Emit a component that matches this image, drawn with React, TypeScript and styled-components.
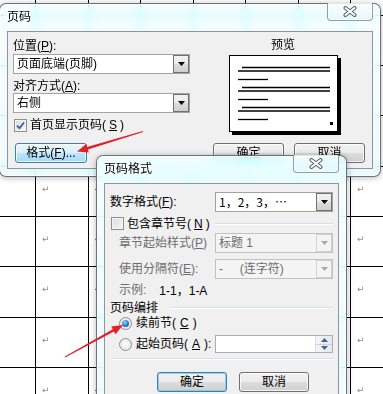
import styled, { createGlobalStyle } from 'styled-components';

const GlobalStyle = createGlobalStyle`
  html, body {
    margin: 0;
    padding: 0;
    background: #fff;
  }
  body {
    font-family: "Liberation Sans", "Noto Sans CJK SC", sans-serif;
    font-size: 12px;
    line-height: 14px;
    color: #000;
  }
`;

const Screen = styled.div`
  position: relative;
  width: 383px;
  height: 394px;
  overflow: hidden;
  background: #fff;
`;

/* the Word table that lies behind both dialogs */
const COLS = 8;
const ROWS = 9;

const DocTable = styled.div`
  display: grid;
  grid-template-columns: repeat(${COLS}, 52.5px);
  grid-auto-rows: 50.33px;
  width: max-content;
  margin: -34.67px 0 0 -16.5px;
`;

const DocCell = styled.div`
  box-sizing: border-box;
  display: flex;
  align-items: center;
  padding: 0 0 5px 6px;
  border-right: 1px solid #000;
  border-bottom: 1px solid #000;
  font-family: "DejaVu Sans", sans-serif;
  font-size: 9px;
  line-height: 10px;
  color: #8c8c8c;
`;

/* Aero frame; dialogs float freely over the document */
const Window = styled.div<{ $x: number; $y: number; $w: number; $h: number }>`
  position: absolute;
  left: ${(p) => p.$x}px;
  top: ${(p) => p.$y}px;
  width: ${(p) => p.$w}px;
  height: ${(p) => p.$h}px;
  box-sizing: border-box;
  display: flex;
  flex-direction: column;
  padding: 0 7px 7px;
  border: 1px solid rgba(52, 62, 72, 0.72);
  border-radius: 7px;
  background: linear-gradient(rgba(246, 252, 254, 0.66), rgba(236, 248, 252, 0.66));
  backdrop-filter: blur(4px) sepia(1) hue-rotate(135deg) saturate(2.2) brightness(1.06);
  box-shadow: 0 1px 6px rgba(0, 0, 0, 0.28), inset 0 0 0 1px rgba(255, 255, 255, 0.75);
`;

const TitleBar = styled.div`
  flex: none;
  height: 27px;
  display: flex;
  align-items: flex-start;
  justify-content: space-between;
`;

const Title = styled.span`
  line-height: 27px;
  text-shadow: 0 0 6px #fff, 0 0 3px #fff;
`;

const CloseButton = styled.span`
  margin-top: -1px;
  width: 46px;
  height: 18px;
  box-sizing: border-box;
  display: flex;
  align-items: center;
  justify-content: center;
  border: 1px solid rgba(70, 80, 92, 0.55);
  border-top: none;
  border-radius: 0 0 4px 4px;
  background: linear-gradient(rgba(255, 255, 255, 0.55), rgba(226, 238, 244, 0.35));
  box-shadow: inset 0 0 0 1px rgba(255, 255, 255, 0.6);
`;

const Client = styled.div`
  flex: 1;
  min-height: 0;
  display: flex;
  flex-direction: column;
  background: #f0f0f0;
  border: 1px solid rgba(84, 94, 106, 0.62);
`;

const Mn = styled.span`
  text-decoration: underline;
  text-underline-offset: 1px;
`;

const Cjk = styled.span`
  font-family: "Noto Sans CJK SC", sans-serif;
`;

/* ---------- shared controls ---------- */

const Combo = styled.div<{ $disabled?: boolean; $w: number }>`
  box-sizing: border-box;
  width: ${(p) => p.$w}px;
  height: 20px;
  display: flex;
  align-items: stretch;
  border: 1px solid ${(p) => (p.$disabled ? '#c2c2c2' : '#a3a3a3')};
  background: ${(p) => (p.$disabled ? '#f4f4f4' : '#fff')};
  color: ${(p) => (p.$disabled ? '#6d6d6d' : '#000')};
`;

const ComboText = styled.span`
  flex: 1;
  padding-left: 3px;
  line-height: 18px;
  white-space: pre;
`;

const DropButton = styled.span<{ $disabled?: boolean }>`
  width: 16px;
  box-sizing: border-box;
  display: flex;
  align-items: center;
  justify-content: center;
  border: 1px solid ${(p) => (p.$disabled ? '#d2d2d2' : '#707070')};
  background: ${(p) =>
    p.$disabled
      ? '#f4f4f4'
      : 'linear-gradient(#f2f2f2 0%, #ebebeb 50%, #dddddd 50%, #cfcfcf 100%)'};
`;

const Arrow = ({ color }: { color: string }) => (
  <svg width="7" height="4" viewBox="0 0 7 4">
    <polygon points="0,0 7,0 3.5,4" fill={color} />
  </svg>
);

const ComboBox = ({
  children,
  width,
  disabled,
}: {
  children: React.ReactNode;
  width: number;
  disabled?: boolean;
}) => (
  <Combo $w={width} $disabled={disabled}>
    <ComboText>{children}</ComboText>
    <DropButton $disabled={disabled}>
      <Arrow color={disabled ? '#a8a8a8' : '#000'} />
    </DropButton>
  </Combo>
);

const CheckBox = styled.span`
  flex: none;
  width: 13px;
  height: 13px;
  box-sizing: border-box;
  display: flex;
  align-items: center;
  justify-content: center;
  border: 1px solid #8e8f8f;
  background: linear-gradient(135deg, #d9dbde, #f7f7f7);
  box-shadow: inset 0 0 0 1px #f4f4f4;
`;

const CheckRow = styled.div<{ $ml: number; $gap: number }>`
  display: flex;
  align-items: center;
  gap: ${(p) => p.$gap}px;
  margin-left: ${(p) => p.$ml}px;
  white-space: nowrap;
`;

const Radio = styled.span<{ $checked?: boolean }>`
  flex: none;
  width: 13px;
  height: 13px;
  box-sizing: border-box;
  border-radius: 50%;
  display: flex;
  align-items: center;
  justify-content: center;
  border: 1px solid #8e8f8f;
  background: radial-gradient(circle at 50% 50%, #f6f6f6 30%, #dcdcdc 100%);

  &::after {
    content: '';
    display: ${(p) => (p.$checked ? 'block' : 'none')};
    width: 7px;
    height: 7px;
    border-radius: 50%;
    background: radial-gradient(circle at 40% 35%, #9bd6ff 0%, #2a79c9 55%, #0c3f87 100%);
  }
`;

const PushButton = styled.span<{ $w: number; $tone?: 'hot' | 'default' }>`
  width: ${(p) => p.$w}px;
  height: 20px;
  box-sizing: border-box;
  display: flex;
  align-items: center;
  justify-content: center;
  border-radius: 3px;
  border: 1px solid ${(p) => (p.$tone ? '#3c7fb1' : '#707070')};
  background: ${(p) =>
    p.$tone === 'hot'
      ? 'linear-gradient(#eaf6fd 0%, #d9f0fc 50%, #bee6fd 50%, #a7d9f5 100%)'
      : 'linear-gradient(#f2f2f2 0%, #ebebeb 50%, #dddddd 50%, #cfcfcf 100%)'};
  box-shadow: inset 0 0 0 1px
    ${(p) => (p.$tone === 'default' ? 'rgba(120, 200, 240, 0.8)' : 'rgba(255, 255, 255, 0.75)')};
  white-space: nowrap;
`;

const CloseGlyph = () => (
  <svg width="14" height="11" viewBox="0 0 14 11">
    <g strokeLinecap="round">
      <path d="M2.5 2 L11.5 9 M11.5 2 L2.5 9" stroke="#56606c" strokeWidth="4" />
      <path d="M2.5 2 L11.5 9 M11.5 2 L2.5 9" stroke="#fff" strokeWidth="2" />
    </g>
  </svg>
);

/* ---------- 页码 dialog ---------- */

const PnTop = styled.div`
  display: flex;
  height: 103px;
`;

const PnFields = styled.div`
  width: 177px;
  margin-left: 5px;
  padding-top: 7px;
  display: flex;
  flex-direction: column;
`;

const FieldLabel = styled.div<{ $mt?: number }>`
  margin-top: ${(p) => p.$mt ?? 0}px;
  min-height: 14px;
  white-space: nowrap;
`;

const PnPreview = styled.div`
  flex: 1;
  padding: 6px 0 0 39px;
  display: flex;
  flex-direction: column;
  align-items: flex-start;
`;

const PreviewLabel = styled.div`
  margin: 0 0 3px 42px;
  height: 14px;
`;

const PnButtons = styled.div`
  margin-top: 8px;
  padding: 0 7px;
  display: flex;
  gap: 10px;
`;

const Spacer = styled.span`
  flex: 1;
`;

const PreviewPage = () => (
  <svg width="112" height="80" viewBox="0 0 112 80">
    <rect x="3" y="3" width="109" height="77" fill="#000" />
    <rect x="0.5" y="0.5" width="108" height="76" fill="#fff" stroke="#000" />
    {[12, 32, 52].map((y) => (
      <g key={y} stroke="#000" strokeWidth="1.3">
        <line x1="13" x2="101" y1={y + 0.5} y2={y + 0.5} />
        <line x1="9" x2="101" y1={y + 4} y2={y + 4} />
        <line x1="9" x2="39" y1={y + 12.5} y2={y + 12.5} />
      </g>
    ))}
    <rect x="101" y="67" width="3" height="3" fill="#000" />
  </svg>
);

const CheckMark = () => (
  <svg width="9" height="9" viewBox="0 0 9 9">
    <path d="M1 4.6 L3.5 7.2 L8 1.5" fill="none" stroke="#3f5a94" strokeWidth="1.8" />
  </svg>
);

const PageNumberDialog = () => (
  <Window $x={-1} $y={3} $w={382} $h={174}>
    <TitleBar>
      <Title>页码</Title>
      <CloseButton>
        <CloseGlyph />
      </CloseButton>
    </TitleBar>
    <Client>
      <PnTop>
        <PnFields>
          <FieldLabel>
            位置(<Mn>P</Mn>):
          </FieldLabel>
          <FieldLabel $mt={1}>
            <ComboBox width={177}>页面底端(页脚)</ComboBox>
          </FieldLabel>
          <FieldLabel $mt={5}>
            对齐方式(<Mn>A</Mn>):
          </FieldLabel>
          <ComboBox width={177}>右侧</ComboBox>
          <FieldLabel $mt={5}>
            <CheckRow $ml={1} $gap={3}>
              <CheckBox>
                <CheckMark />
              </CheckBox>
              首页显示页码(<Mn>S</Mn>)
            </CheckRow>
          </FieldLabel>
        </PnFields>
        <PnPreview>
          <PreviewLabel>预览</PreviewLabel>
          <PreviewPage />
        </PnPreview>
      </PnTop>
      <PnButtons>
        <PushButton $w={72} $tone="hot">
          格式(<Mn>F</Mn>)...
        </PushButton>
        <Spacer />
        <PushButton $w={71}>确定</PushButton>
        <PushButton $w={71}>取消</PushButton>
      </PnButtons>
    </Client>
  </Window>
);

/* ---------- 页码格式 dialog ---------- */

const PfBody = styled.div`
  padding: 8px 5px 0 5px;
  display: flex;
  flex-direction: column;
`;

const PfRow = styled.div<{ $mt: number; $h: number }>`
  margin-top: ${(p) => p.$mt}px;
  height: ${(p) => p.$h}px;
  display: flex;
  align-items: center;
`;

const PfLabel = styled.div<{ $indent?: number; $muted?: boolean }>`
  width: 105px;
  box-sizing: border-box;
  padding-left: ${(p) => p.$indent ?? 0}px;
  color: ${(p) => (p.$muted ? '#6d6d6d' : '#000')};
  white-space: nowrap;
  display: flex;
  align-items: center;
`;

const EtchedLine = styled.span<{ $ml?: number }>`
  flex: 1;
  height: 0;
  margin-left: ${(p) => p.$ml ?? 0}px;
  border-top: 1px solid #d5dfe5;
  border-bottom: 1px solid #fff;
`;

const Muted = styled.span`
  color: #6d6d6d;
`;

const SampleValue = styled.span`
  margin-left: 13px;
`;

const SpinInput = styled.div`
  box-sizing: border-box;
  width: 118px;
  height: 18px;
  display: flex;
  justify-content: flex-end;
  border: 1px solid #abadb3;
  background: #fff;
`;

const SpinButtons = styled.div`
  width: 16px;
  display: flex;
  flex-direction: column;
  border-left: 1px solid #d8dde3;
  background: linear-gradient(90deg, #f3f6f9, #e3e9ef);
`;

const SpinHalf = styled.span<{ $up?: boolean }>`
  flex: 1;
  display: flex;
  align-items: center;
  justify-content: center;
  border-bottom: ${(p) => (p.$up ? '1px solid #c9d3dc' : 'none')};
  svg {
    transform: ${(p) => (p.$up ? 'rotate(180deg)' : 'none')};
  }
`;

const PfButtons = styled.div`
  margin-top: 12px;
  padding-left: 47px;
  display: flex;
  gap: 12px;
`;

const PageFormatDialog = () => (
  <Window $x={96} $y={155} $w={251} $h={260}>
    <TitleBar>
      <Title>页码格式</Title>
      <CloseButton>
        <CloseGlyph />
      </CloseButton>
    </TitleBar>
    <Client>
      <PfBody>
        <PfRow $mt={0} $h={20}>
          <PfLabel>
            数字格式(<Mn>F</Mn>):
          </PfLabel>
          <ComboBox width={118}>
            <Cjk>1，2，3，…</Cjk>
          </ComboBox>
        </PfRow>
        <PfRow $mt={3} $h={17}>
          <PfLabel>
            <CheckRow $ml={1} $gap={3}>
              <CheckBox />
              包含章节号(<Mn>N</Mn>)
            </CheckRow>
          </PfLabel>
          <EtchedLine />
        </PfRow>
        <PfRow $mt={1} $h={20}>
          <PfLabel $indent={9} $muted>
            章节起始样式(<Mn>P</Mn>)
          </PfLabel>
          <ComboBox width={118} disabled>
            标题 1
          </ComboBox>
        </PfRow>
        <PfRow $mt={6} $h={20}>
          <PfLabel $indent={9} $muted>
            使用分隔符(<Mn>E</Mn>):
          </PfLabel>
          <ComboBox width={118} disabled>
            {'-     (连字符)'}
          </ComboBox>
        </PfRow>
        <PfRow $mt={4} $h={14}>
          <PfLabel $indent={9}>
            <Muted>示例:</Muted>
            <SampleValue>
              1-1<Cjk>，</Cjk>1-A
            </SampleValue>
          </PfLabel>
        </PfRow>
        <PfRow $mt={4} $h={14}>
          <span>页码编排</span>
          <EtchedLine $ml={12} />
        </PfRow>
        <PfRow $mt={1} $h={14}>
          <PfLabel $indent={9}>
            <CheckRow $ml={0} $gap={4}>
              <Radio $checked />
              续前节(<Mn>C</Mn>)
            </CheckRow>
          </PfLabel>
        </PfRow>
        <PfRow $mt={5} $h={18}>
          <PfLabel $indent={9}>
            <CheckRow $ml={0} $gap={4}>
              <Radio />
              起始页码(<Mn>A</Mn>):
            </CheckRow>
          </PfLabel>
          <SpinInput>
            <SpinButtons>
              <SpinHalf $up>
                <Arrow color="#4c607a" />
              </SpinHalf>
              <SpinHalf>
                <Arrow color="#4c607a" />
              </SpinHalf>
            </SpinButtons>
          </SpinInput>
        </PfRow>
        <PfRow $mt={5} $h={2}>
          <EtchedLine $ml={3} />
        </PfRow>
        <PfButtons>
          <PushButton $w={70} $tone="default">
            确定
          </PushButton>
          <PushButton $w={70}>取消</PushButton>
        </PfButtons>
      </PfBody>
    </Client>
  </Window>
);

/* red call-out arrows drawn over the screenshot */
const Callouts = styled.svg`
  position: absolute;
  left: 0;
  top: 0;
  pointer-events: none;
`;

const App = () => {
  const cells = Array.from({ length: COLS * ROWS }, (_, i) => i);
  return (
    <Screen>
      <GlobalStyle />
      <DocTable>
        {cells.map((i) => {
          // the first row and column lie mostly off-screen: their marks are not visible
          const visible = i >= COLS && i % COLS !== 0;
          return <DocCell key={i}>{visible ? '↵' : null}</DocCell>;
        })}
      </DocTable>
      <PageNumberDialog />
      <PageFormatDialog />
      <Callouts width="383" height="394" viewBox="0 0 383 394">
        <polygon
          fill="#e3202a"
          points="143.2,132 87.9,149.5 88.8,152.6 77,151.5 86.2,144 87.1,147.1 142.8,131"
        />
        <polygon
          fill="#e3202a"
          points="65.2,357.4 113.9,331.4 115.5,334.3 123,325 111.2,326.4 112.8,329.3 64.8,356.6"
        />
      </Callouts>
    </Screen>
  );
};

export default App;
